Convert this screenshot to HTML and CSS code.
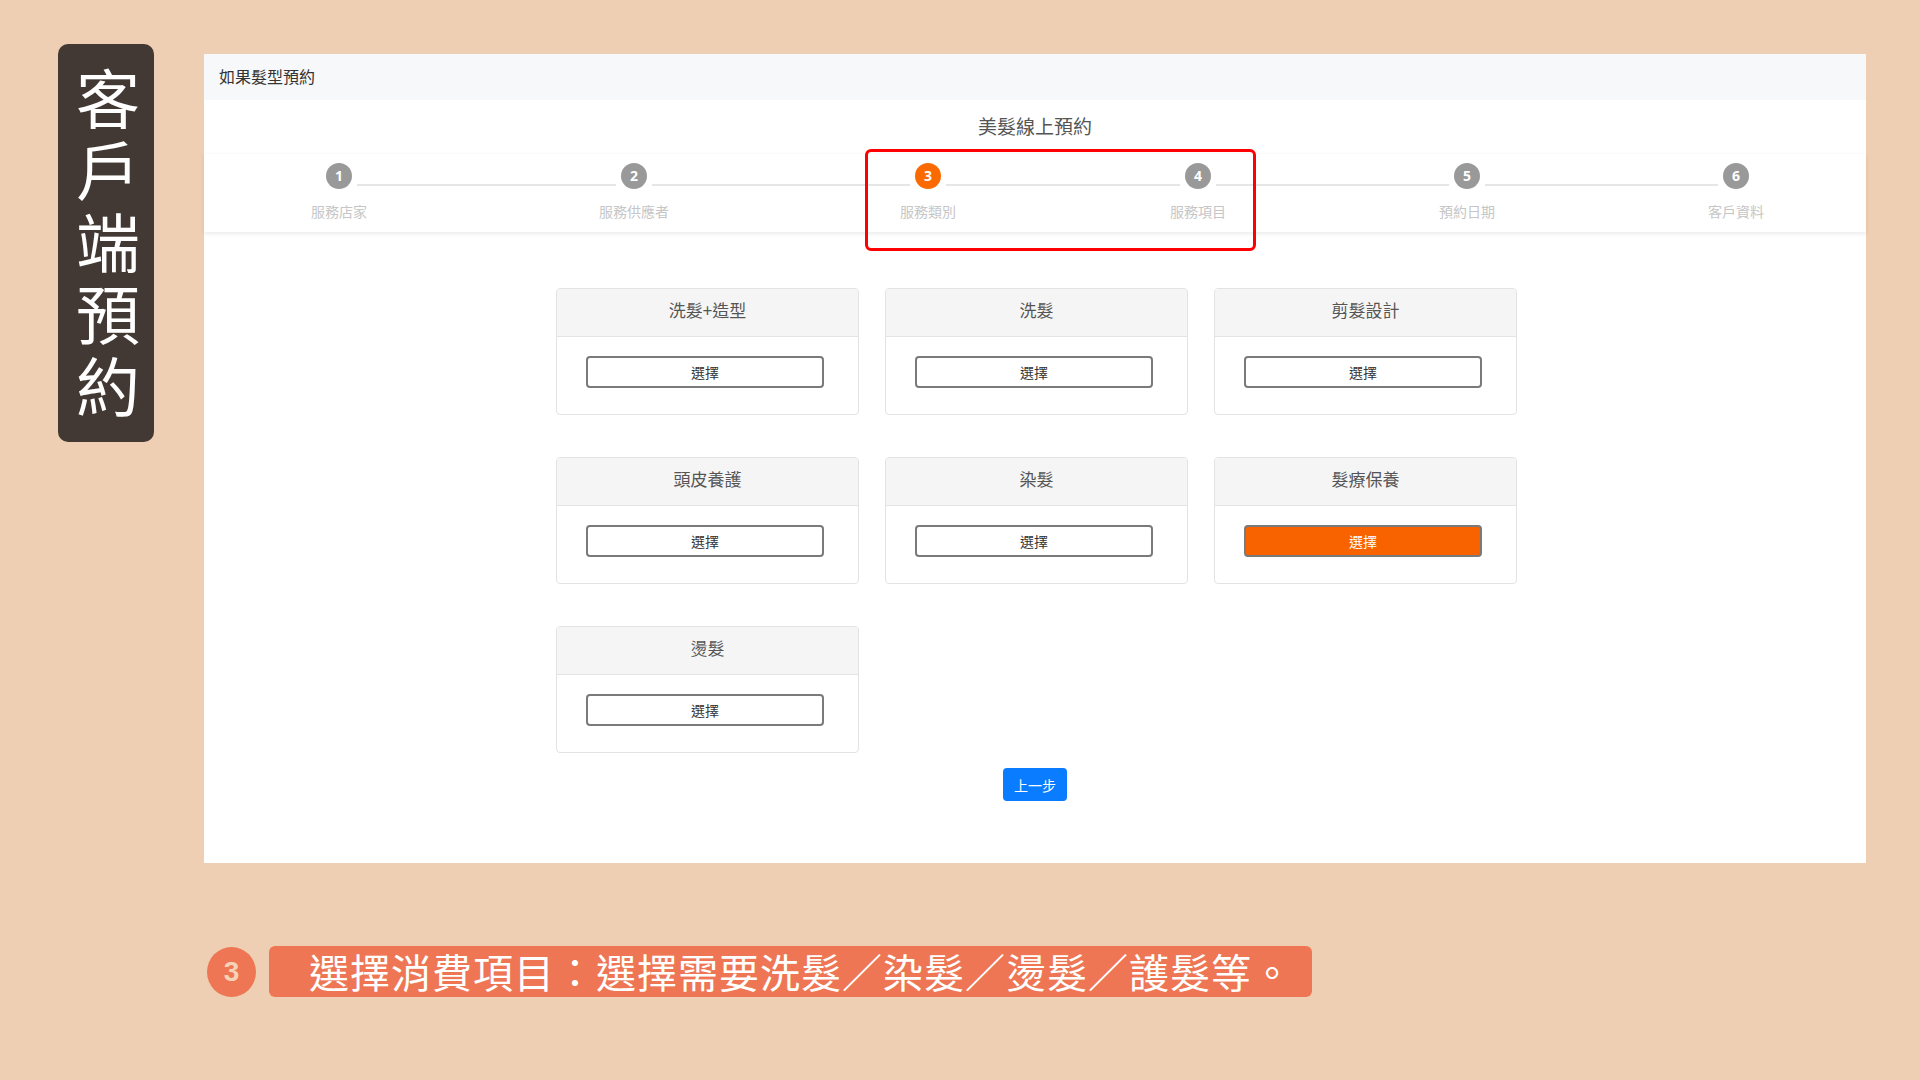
FILE: index.html
```html
<!DOCTYPE html>
<html lang="zh-Hant">
<head>
<meta charset="utf-8">
<title>客戶端預約</title>
<link rel="stylesheet" href="styles.css">
</head>
<body>
<div class="slide">
  <div class="top">
    <aside class="side-title">客戶端預約</aside>
    <section class="panel">
      <header class="panel-head">如果髮型預約</header>
      <h1 class="panel-title">美髮線上預約</h1>
      <div class="stepper">
        <div class="step"><span class="dot">1</span><span class="label">服務店家</span></div>
        <span class="line w1"></span>
        <div class="step"><span class="dot">2</span><span class="label">服務供應者</span></div>
        <span class="line w2"></span>
        <div class="step"><span class="dot active">3</span><span class="label">服務類別</span></div>
        <span class="line w3"></span>
        <div class="step"><span class="dot">4</span><span class="label">服務項目</span></div>
        <span class="line w4"></span>
        <div class="step"><span class="dot">5</span><span class="label">預約日期</span></div>
        <span class="line w4"></span>
        <div class="step"><span class="dot">6</span><span class="label">客戶資料</span></div>
      </div>
      <div class="highlight"></div>
      <div class="cards">
        <div class="card"><div class="card-head">洗髮+造型</div><div class="card-body"><button class="pick">選擇</button></div></div>
        <div class="card"><div class="card-head">洗髮</div><div class="card-body"><button class="pick">選擇</button></div></div>
        <div class="card"><div class="card-head">剪髮設計</div><div class="card-body"><button class="pick">選擇</button></div></div>
        <div class="card"><div class="card-head">頭皮養護</div><div class="card-body"><button class="pick">選擇</button></div></div>
        <div class="card"><div class="card-head">染髮</div><div class="card-body"><button class="pick">選擇</button></div></div>
        <div class="card"><div class="card-head">髮療保養</div><div class="card-body"><button class="pick selected">選擇</button></div></div>
        <div class="card"><div class="card-head">燙髮</div><div class="card-body"><button class="pick">選擇</button></div></div>
      </div>
      <div class="actions"><button class="back">上一步</button></div>
    </section>
  </div>
  <div class="caption">
    <span class="num">3</span>
    <span class="caption-text">選擇消費項目：選擇需要洗髮／染髮／燙髮／護髮等。</span>
  </div>
</div>
</body>
</html>
```
FILE: styles.css
```css
* { box-sizing: border-box; }
html, body { margin: 0; padding: 0; }
body {
  width: 1920px;
  height: 1080px;
  overflow: hidden;
  background: #efcfb3;
  font-family: "Noto Sans CJK TC", "Noto Sans", sans-serif;
  color: #333;
}
.slide { display: flex; flex-direction: column; }
.top { display: flex; align-items: flex-start; padding: 44px 0 0 58px; gap: 50px; }
.side-title {
  writing-mode: vertical-rl;
  width: 96px;
  height: 398px;
  background: #433934;
  border-radius: 10px;
  color: #fff;
  font-size: 64px;
  line-height: 92px;
  letter-spacing: 8px;
  padding-top: 23px;
  padding-left: 4px;
}
.panel {
  position: relative;
  margin-top: 10px;
  width: 1662px;
  height: 809px;
  background: #fff;
}
.panel-head {
  height: 46px;
  line-height: 44px;
  background: #f7f8fa;
  padding-left: 15px;
  font-size: 16px;
  color: #333;
}
.panel-title {
  margin: 12px 0 13px;
  text-align: center;
  font-size: 19px;
  line-height: 28px;
  font-weight: 400;
  color: #555;
}
.stepper {
  display: flex;
  align-items: flex-start;
  height: 79px;
  padding: 9px 0 0 122px;
  background: #fff;
  box-shadow: 0 2px 4px rgba(0,0,0,0.08);
  border-top: 1px solid #f8fcfb;
}
.step { width: 26px; display: flex; flex-direction: column; align-items: center; }
.dot {
  width: 26px; height: 26px; border-radius: 50%;
  background: #999;
  color: #fff;
  font-family: "Open Sans", sans-serif;
  font-weight: 700;
  font-size: 14px;
  line-height: 26px;
  text-align: center;
}
.dot.active { background: #fb6a00; }
.label {
  margin-top: 12px;
  white-space: nowrap;
  font-size: 14px;
  line-height: 20px;
  color: #c6c6c6;
}
.line { height: 2px; margin: 21px 5px 0; background: #e6e6e6; flex: none; }
.w1 { width: 259px; }
.w2 { width: 258px; }
.w3 { width: 234px; }
.w4 { width: 233px; }
.highlight {
  position: absolute;
  left: 661px; top: 95px;
  width: 391px; height: 102px;
  border: 3px solid #ff0000;
  border-radius: 6px;
}
.cards {
  display: grid;
  grid-template-columns: repeat(3, 303px);
  column-gap: 26px;
  row-gap: 42px;
  justify-content: center;
  padding-left: 3px;
  margin-top: 56px;
}
.card {
  height: 127px;
  border: 1px solid #e3e3e3;
  border-radius: 4px;
  overflow: hidden;
}
.card-head {
  height: 48px;
  line-height: 42px;
  background: #f5f5f5;
  border-bottom: 1px solid #e4e4e4;
  text-align: center;
  font-size: 17px;
  color: #555;
}
.card-body { padding: 19px 34px 0 29px; }
.pick {
  display: block;
  width: 100%;
  height: 32px;
  border: 2px solid #7a7a7a;
  border-radius: 4px;
  background: #fff;
  font-family: "Noto Sans CJK TC", sans-serif;
  font-size: 14px;
  color: #333;
  padding: 0;
}
.pick.selected { background: #f86300; color: #fff; }
.actions { display: flex; justify-content: center; margin-top: 15px; }
.back {
  width: 64px; height: 33px;
  background: #0a7cff;
  border: none;
  border-radius: 4px;
  color: #fff;
  font-family: "Noto Sans CJK TC", sans-serif;
  font-size: 14px;
  padding: 0;
}
.caption {
  display: flex;
  align-items: center;
  gap: 13px;
  margin-top: 83px;
  padding-left: 207px;
}
.num {
  width: 49px; height: 50px;
  border-radius: 50%;
  background: #ee7654;
  color: #f6d3b8;
  font-family: "Liberation Sans", sans-serif;
  font-weight: 700;
  font-size: 28px;
  line-height: 50px;
  text-align: center;
}
.caption-text {
  height: 51px;
  width: 1043px;
  background: #ee7654;
  border-radius: 6px;
  color: #fff;
  font-size: 40px;
  letter-spacing: 1px;
  line-height: 51px;
  padding-left: 40px;
  white-space: nowrap;
}
```
